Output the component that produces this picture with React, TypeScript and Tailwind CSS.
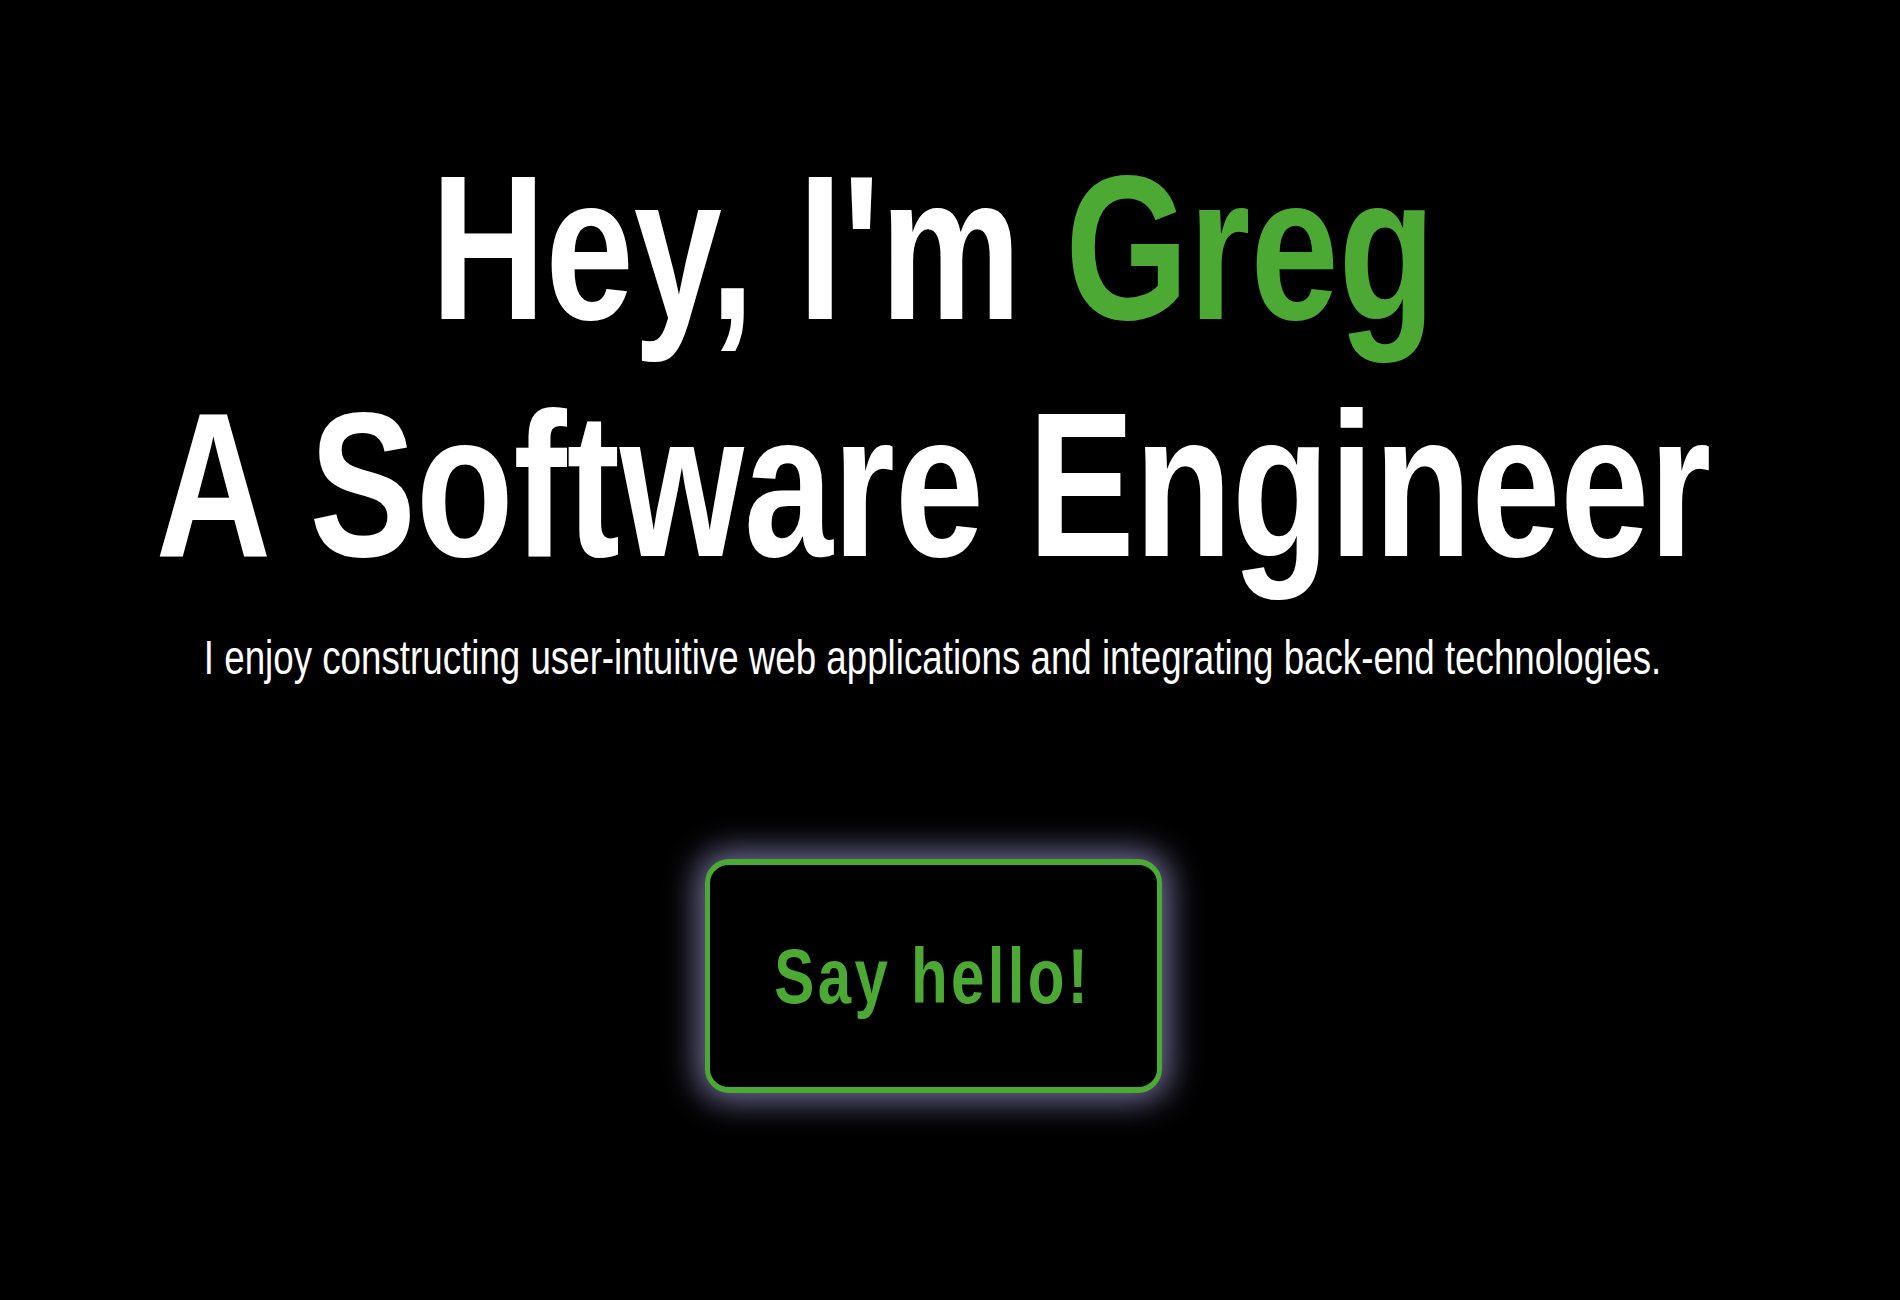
import React from 'react'

const font = { fontFamily: '"Liberation Sans", Arial, sans-serif' }

export default function App() {
  return (
    <div className="min-h-screen w-full overflow-hidden bg-black text-white" style={font}>
      <main className="flex flex-col items-center pt-[130px] pr-[34px]">
        {/* Heading */}
        <h1 className="flex w-full flex-col items-center font-bold text-[206px] leading-[237px]">
          <span className="block shrink-0 whitespace-nowrap scale-x-[0.77]">
            Hey, I'm <span className="text-[#4ba934]">Greg</span>
          </span>
          <span className="block shrink-0 whitespace-nowrap scale-x-[0.775]">A Software Engineer</span>
        </h1>

        <div className="mt-[26px] flex w-full flex-col items-center">
          <p className="shrink-0 whitespace-nowrap text-[48px] leading-[56px] scale-x-[0.765]">
            I enjoy constructing user-intuitive web applications and integrating back-end technologies.
          </p>
        </div>

        {/* CTA */}
        <button
          type="button"
          className="mt-[173px] flex h-[234px] w-[457px] items-center justify-center rounded-[24px] border-x-[5px] border-y-[6px] border-[#4ba934] bg-black shadow-[0_0_32px_8px_rgba(140,136,190,0.8)]"
        >
          <span className="block scale-x-[0.77] text-[78px] font-bold leading-[78px] tracking-[4.3px] text-[#4ba934] whitespace-nowrap">
            Say hello!
          </span>
        </button>
      </main>
    </div>
  )
}
